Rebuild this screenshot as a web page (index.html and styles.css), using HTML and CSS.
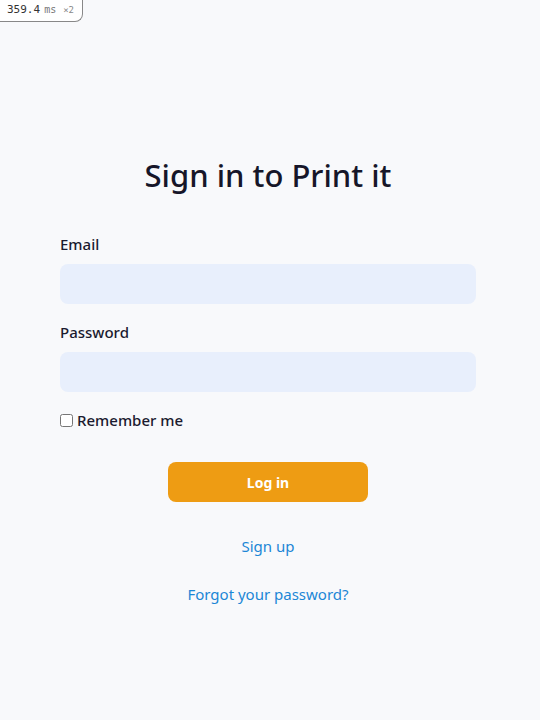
FILE: index.html
```html
<!DOCTYPE html>
<html>
<head>
<meta charset="utf-8">
<link rel="stylesheet" href="styles.css">
</head>
<body>
<div class="perf">359.4<span class="unit">ms</span><span class="mult">×2</span></div>
<main class="page">
  <h1 class="title">Sign in to Print it</h1>
  <form class="form">
    <div class="field">
      <label class="label" for="email">Email</label>
      <input class="input" id="email" type="email">
    </div>
    <div class="field">
      <label class="label" for="password">Password</label>
      <input class="input" id="password" type="password">
    </div>
    <label class="remember"><input type="checkbox" class="check"> Remember me</label>
    <div class="actions"><button type="button" class="btn">Log in</button></div>
  </form>
  <div class="links">
    <a href="#" class="link">Sign up</a>
    <a href="#" class="link">Forgot your password?</a>
  </div>
</main>
</body>
</html>
```
FILE: styles.css
```css
html, body {
  margin: 0;
  padding: 0;
  background: #f8f9fb;
  font-family: "Noto Sans", "Open Sans", sans-serif;
  color: #1b1b2f;
}
.perf {
  position: absolute;
  top: 0;
  left: 0;
  font-family: "DejaVu Sans Mono", monospace;
  font-size: 11px;
  color: #333;
  background: #fff;
  border: 1px solid #888;
  border-top: none;
  border-left: none;
  border-bottom-right-radius: 8px;
  padding: 3px 8px 4px 7px;
  line-height: 13px;
}
.perf .unit { color: #777; margin-left: 4px; font-size: 10px; }
.perf .mult { color: #888; margin-left: 7px; font-size: 9px; }
.page {
  width: 416px;
  margin: 0 0 0 60px;
  padding-top: 152px;
}
.title {
  margin: 0 0 35px 0;
  text-align: center;
  font-size: 31px;
  font-weight: 500;
  line-height: 46px;
  color: #161629;
}
.form { display: flex; flex-direction: column; }
.field { display: flex; flex-direction: column; margin-bottom: 17px; }
.label {
  font-size: 15px;
  font-weight: 500;
  line-height: 22px;
  margin-bottom: 9px;
}
.input {
  height: 40px;
  box-sizing: border-box;
  border: none;
  border-radius: 8px;
  background: #e8effc;
  outline: none;
}
.remember {
  display: flex;
  align-items: center;
  font-size: 15px;
  font-weight: 500;
  line-height: 22px;
  margin-top: 0;
}
.check { margin: 0 4px 0 0; width: 13px; height: 13px; }
.actions { display: flex; justify-content: center; margin-top: 31px; }
.btn {
  width: 200px;
  height: 40px;
  border: none;
  border-radius: 8px;
  background: #ee9c13;
  color: #fff;
  font-family: inherit;
  font-size: 14px;
  font-weight: 700;
}
.links {
  display: flex;
  flex-direction: column;
  align-items: center;
  gap: 26px;
  margin-top: 33px;
}
.link {
  color: #1c87d6;
  text-decoration: none;
  font-size: 15px;
  line-height: 22px;
}
```
